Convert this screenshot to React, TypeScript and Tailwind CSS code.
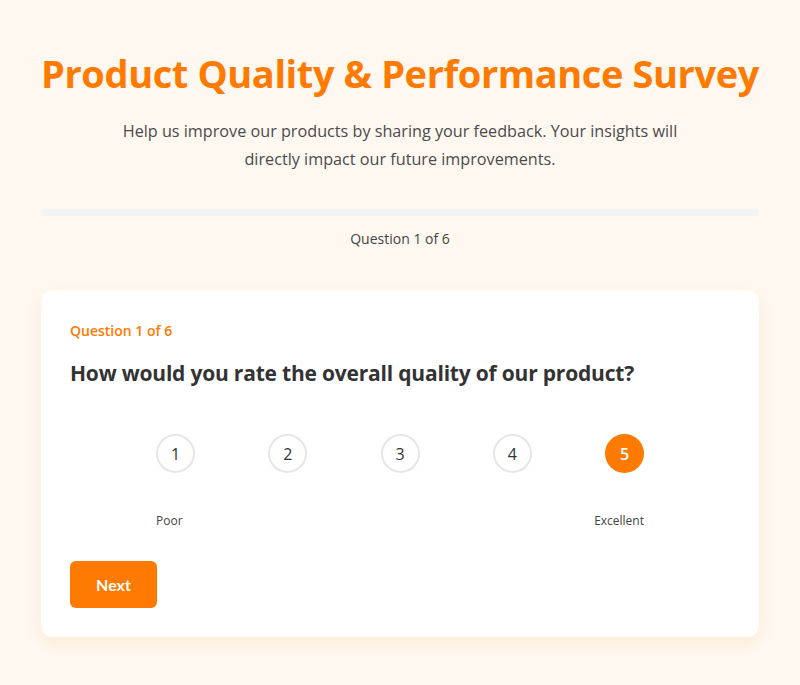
import { useState } from 'react'

const ratings = [1, 2, 3, 4, 5]

export default function App() {
  const [rating, setRating] = useState(5)

  return (
    <div className="min-h-[685px] bg-[#fff8f1] font-['Open_Sans',sans-serif] text-[#333]">
      <div className="mx-auto w-[718px] pt-[44px] pb-12">
        <header className="text-center">
          <h1 className="text-[38px] leading-[58px] font-bold tracking-[-0.4px] text-[#ff7a00]">
            Product Quality &amp; Performance Survey
          </h1>
          <p className="mx-auto mt-[15px] w-[600px] text-[16.2px] leading-[28px] text-[#4b4b4b]">
            Help us improve our products by sharing your feedback. Your insights will directly impact our future
            improvements.
          </p>
        </header>

        <div className="mt-[36px]">
          <div className="h-[7px] w-full rounded-full bg-[#f3f4f5]">
            <div className="h-full w-0 rounded-full bg-[#ff7a00]" />
          </div>
          <p className="mt-[12px] text-center text-[14px] text-[#444]">Question 1 of 6</p>
        </div>

        <section className="mt-[41px] rounded-xl bg-white px-[29px] pt-[30px] pb-[29px] shadow-[0_6px_18px_rgba(255,122,0,0.12)]">
          <p className="text-[14px] font-semibold text-[#ff7a00]">Question 1 of 6</p>
          <h2 className="mt-[16px] text-[21px] leading-[32px] font-bold tracking-[-0.2px] text-[#333]">
            How would you rate the overall quality of our product?
          </h2>

          <div className="mx-auto mt-[45px] w-[488px]">
            <div className="flex justify-between">
              {ratings.map((n) => (
                <button
                  key={n}
                  onClick={() => setRating(n)}
                  className={
                    n === rating
                      ? 'flex h-[39px] w-[39px] items-center justify-center rounded-full bg-[#ff7a00] text-[16px] font-semibold text-white'
                      : 'flex h-[39px] w-[39px] items-center justify-center rounded-full border-2 border-[#e6e6e6] bg-white text-[16px] text-[#333]'
                  }
                >
                  {n}
                </button>
              ))}
            </div>
            <div className="mt-[39px] flex justify-between text-[12px] text-[#444]">
              <span>Poor</span>
              <span>Excellent</span>
            </div>
          </div>

          <button className="mt-[31px] h-[47px] w-[87px] rounded-md bg-[#ff7a00] font-['Lato',sans-serif] text-[16px] font-bold text-white">
            Next
          </button>
        </section>
      </div>
    </div>
  )
}
